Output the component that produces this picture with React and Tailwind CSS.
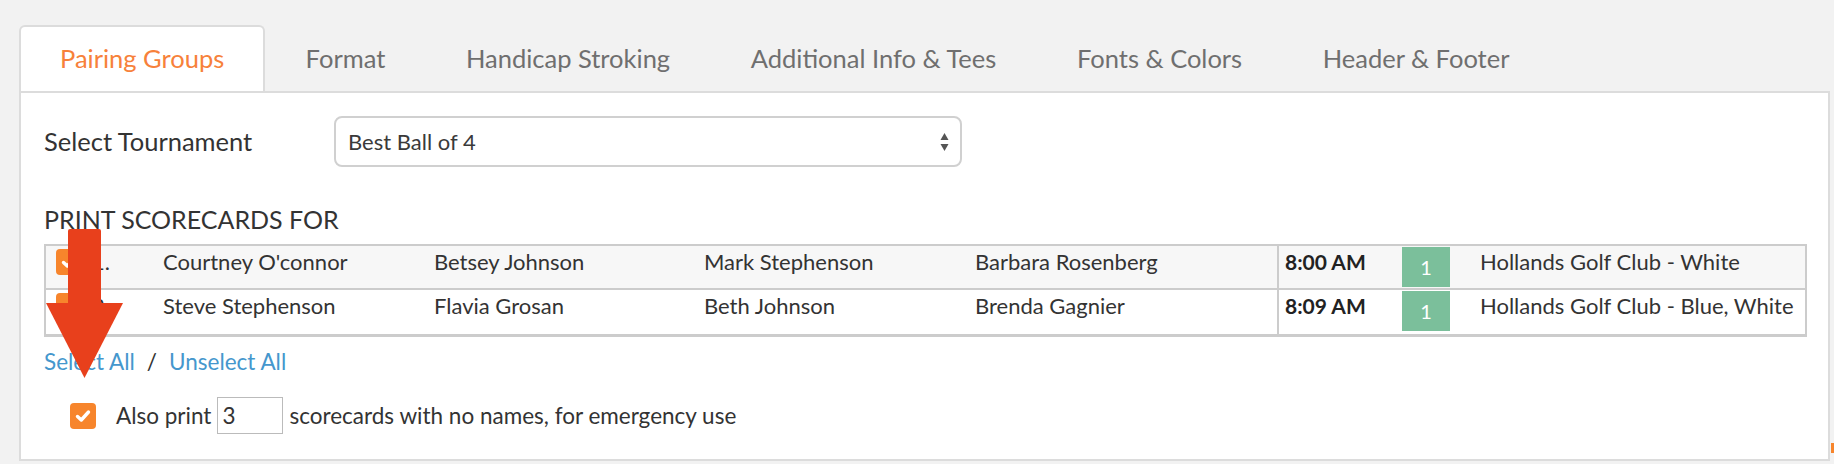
import React from 'react';

const tabs = ['Pairing Groups', 'Format', 'Handicap Stroking', 'Additional Info & Tees', 'Fonts & Colors', 'Header & Footer'];

const rows = [
  { n: '1.', names: ["Courtney O'connor", 'Betsey Johnson', 'Mark Stephenson', 'Barbara Rosenberg'], time: '8:00 AM', hole: '1', course: 'Hollands Golf Club - White' },
  { n: '2.', names: ['Steve Stephenson', 'Flavia Grosan', 'Beth Johnson', 'Brenda Gagnier'], time: '8:09 AM', hole: '1', course: 'Hollands Golf Club - Blue, White' },
];

const nameWidths = ['w-[271px]', 'w-[270px]', 'w-[271px]', 'w-[302px]'];

const Check = () => (
  <span className="flex h-[26px] w-[26px] shrink-0 items-center justify-center rounded-[4px] bg-[#f7852c]">
    <svg width="16" height="14" viewBox="0 0 16 14">
      <path d="M2.5 7.5 L6.3 11 L13.5 3" fill="none" stroke="#fff" strokeWidth="3.4" strokeLinecap="round" strokeLinejoin="round" />
    </svg>
  </span>
);

const App = () => {
  return (
    <div className="relative h-[464px] w-[1834px] overflow-hidden bg-[#f2f2f2] pl-[19px] pt-[25px] font-['Lato',sans-serif] text-[#333]">
      {/* tabs */}
      <div className="flex">
        {tabs.map((t, i) => (
          <div
            key={t}
            className={
              i === 0
                ? 'relative z-10 -mb-[2px] flex h-[66px] items-center rounded-t-[6px] border-2 border-b-0 border-[#dcdcdc] bg-white px-[39px] pb-[2px] text-[25.5px] text-[#f7813a]'
                : 'flex h-[66px] items-center border-2 border-b-0 border-transparent px-[38.3px] pb-[2px] text-[25.5px] text-[#6f6f6f]'
            }
          >
            {t}
          </div>
        ))}
      </div>

      {/* panel */}
      <div className="w-[1811px] border-2 border-[#dcdcdc] bg-white pb-[25px] pl-[23px] pt-[23px]">
        <div className="flex items-center">
          <div className="w-[290px] text-[25.5px]">Select Tournament</div>
          <div className="flex h-[51px] w-[628px] items-center justify-between rounded-[8px] border-2 border-[#d0d0d0] pl-[12px] pr-[11px] text-[22px] text-[#3a3a3a]">
            <span>Best Ball of 4</span>
            <svg width="9" height="20" viewBox="0 0 9 20">
              <path d="M4.5 1 L8.5 8 L0.5 8 Z" fill="#555" />
              <path d="M0.5 12 L8.5 12 L4.5 19 Z" fill="#555" />
            </svg>
          </div>
        </div>

        <div className="mt-[37px] text-[25px] leading-[30px]">PRINT SCORECARDS FOR</div>

        <div className="mt-[10px] w-[1763px] border-2 border-b-[3px] border-[#cccccc] text-[22px]">
          {rows.map((r, i) => (
            <div key={r.n} className={i === 0 ? 'flex h-[44px] border-b-2 border-[#cccccc] bg-[#f7f7f7]' : 'flex h-[44px] bg-white'}>
              <div className="flex w-[117px] items-start gap-[10px] pl-[10px] pt-[3px] leading-[26px]">
                <Check />
                <span>{r.n}</span>
              </div>
              {r.names.map((nm, j) => (
                <div key={nm} className={`${nameWidths[j]} pt-[3px] leading-[26px]`}>
                  {nm}
                </div>
              ))}
              <div className="flex flex-1 items-start border-l-2 border-[#cccccc]">
                <div className="w-[123px] pl-[6px] pt-[3px] text-[21px] font-bold leading-[26px] text-[#222]">{r.time}</div>
                <div className="mt-[1px] flex h-[40px] w-[48px] items-center justify-center bg-[#7bbf9b] text-[20px] text-white">{r.hole}</div>
                <div className="pl-[30px] pt-[3px] leading-[26px]">{r.course}</div>
              </div>
            </div>
          ))}
        </div>

        <div className="mt-[10px] flex text-[22.5px] leading-[30px]">
          <span className="text-[#4597cd]">Select All</span>
          <span className="ml-[12px]">/</span>
          <span className="ml-[12px] text-[#4597cd]">Unselect All</span>
        </div>

        <div className="mt-[20px] flex h-[37px] items-center pl-[26px] text-[22.5px]">
          <Check />
          <span className="ml-[20px]">Also print</span>
          <span className="ml-[6px] flex h-[37px] w-[66px] items-center border border-[#bbbbbb] pl-[4px]">3</span>
          <span className="ml-[6px]">scorecards with no names, for emergency use</span>
        </div>
      </div>

      {/* red arrow annotation */}
      <svg className="absolute left-[46px] top-[229px]" width="77" height="149" viewBox="0 0 77 149">
        <path d="M24 0 H53 Q55 0 55 2 V75 H22 V2 Q22 0 24 0 Z" fill="#e8401c" />
        <path d="M0 74 H77 L38.5 149 Z" fill="#e8401c" />
      </svg>

      <div className="absolute right-0 top-[443px] h-[10px] w-[3px] bg-[#f7852c]" />
    </div>
  );
};

export default App;
